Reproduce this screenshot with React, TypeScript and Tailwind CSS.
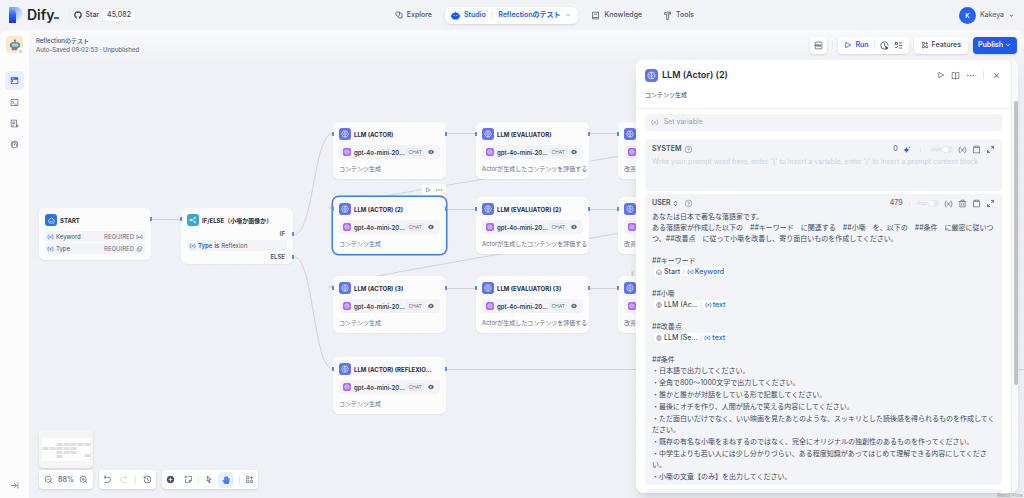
import React, { useState } from "react";
import {
  RiAddCircleFill,
  RiApps2AddLine,
  RiArrowDownSLine,
  RiArrowGoBackLine,
  RiArrowGoForwardLine,
  RiBookOpenLine,
  RiClipboardLine,
  RiCloseLine,
  RiCursorLine,
  RiDashboard2Line,
  RiDeleteBinLine,
  RiExpandUpDownLine,
  RiEyeFill,
  RiFileList3Line,
  RiHammerLine,
  RiHistoryLine,
  RiMoreFill,
  RiOpenaiFill,
  RiQuestionLine,
  RiStickyNoteAddLine,
  RiTerminalBoxLine,
  RiTerminalWindowFill,
  RiZoomInLine,
  RiZoomOutLine,
  RiBook2Line,
} from "react-icons/ri";
import { FaGithub, FaHandPaper } from "react-icons/fa";
import { ArrowRightToLine } from "lucide-react";

type IconProps = { className?: string };

const VarIcon = ({ className }: IconProps) => (
  <svg viewBox="0 0 16 14" fill="none" stroke="currentColor" strokeWidth="1.5" strokeLinecap="round" className={className}>
    <path d="M4 1.5C2 1.5 3.2 6 1.2 7c2 1 .8 5.500 2.800 5.500M12 1.500c2 0 .8 4.500 2.800 5.500-2 1-.8 5.500-2.800 5.500" />
    <path d="m6 4.500 4 5M10 4.500l-4 5" />
  </svg>
);

const LlmIcon = ({ className }: IconProps) => (
  <svg viewBox="0 0 16 16" fill="none" stroke="currentColor" strokeWidth="1.400" strokeLinecap="round" className={className}>
    <path d="M8 2.500v11M8 2.500C5.500 1.300 3 2.800 3 5 1.400 6.800 1.400 9.200 3 11c0 2.200 2.500 3.700 5 2.500M8 2.500c2.500-1.200 5 .3 5 2.500 1.600 1.800 1.600 4.200 0 6 0 2.200-2.500 3.700-5 2.500" />
    <path d="M5.200 6.500c.8.800.8 2.200 0 3M10.800 6.500c-.8.800-.8 2.200 0 3" strokeWidth="1" />
  </svg>
);

const HomeIcon = ({ className }: IconProps) => (
  <svg viewBox="0 0 16 16" fill="none" stroke="currentColor" strokeWidth="1.500" strokeLinecap="round" strokeLinejoin="round" className={className}>
    <path d="M2 6.500 8 2l6 4.500V12a2 2 0 0 1-2 2H4a2 2 0 0 1-2-2Z" />
    <path d="M5 9.500c1.500 2 4.500 2 6 0" />
  </svg>
);

const BranchIcon = ({ className }: IconProps) => (
  <svg viewBox="0 0 16 16" fill="none" stroke="currentColor" strokeWidth="1.400" className={className}>
    <path d="M5 8h2l4-4M7 8l4 4" />
    <circle cx="3.500" cy="8" r="1.600" fill="currentColor" />
    <circle cx="12" cy="3.500" r="1.400" />
    <circle cx="12" cy="12.500" r="1.400" />
  </svg>
);

const PlayIcon = ({ className }: IconProps) => (
  <svg viewBox="0 0 16 16" fill="none" stroke="currentColor" strokeWidth="1.600" strokeLinejoin="round" className={className}>
    <path d="M3.500 2.500v11L13.500 8Z" />
  </svg>
);

const RobotIcon = ({ className }: IconProps) => (
  <svg viewBox="0 0 16 16" fill="currentColor" className={className}>
    <path
      fillRule="evenodd"
      d="M7.300 1h1.400v2H11a3 3 0 0 1 3 3v.5h.5c.8 0 1.500.7 1.500 1.500v2c0 .8-.7 1.500-1.500 1.500H14v.5a3 3 0 0 1-3 3H5a3 3 0 0 1-3-3v-.5h-.5A1.500 1.500 0 0 1 0 10V8c0-.8.7-1.500 1.500-1.500H2V6a3 3 0 0 1 3-3h2.300ZM5.500 7a1 1 0 1 0 0 2 1 1 0 0 0 0-2Zm5 0a1 1 0 1 0 0 2 1 1 0 0 0 0-2Z"
    />
  </svg>
);

const ExploreIcon = ({ className }: IconProps) => (
  <svg viewBox="0 0 16 16" fill="none" stroke="currentColor" strokeWidth="1.500" strokeLinejoin="round" className={className}>
    <path d="M2 3.500C2 2.700 2.700 2 3.500 2H9v6.500L6 11 2 8Z" />
    <path d="M9 4h2.500A2.500 2.500 0 0 1 14 6.500V14H9a3 3 0 0 1-3-3" />
  </svg>
);

const EnvIcon = ({ className }: IconProps) => (
  <svg viewBox="0 0 16 16" fill="none" stroke="currentColor" strokeWidth="1.300" strokeLinecap="round" className={className}>
    <path d="M2 4.500V3.500A1.500 1.500 0 0 1 3.500 2h9A1.500 1.500 0 0 1 14 3.500v1M2 11.500v1A1.500 1.500 0 0 0 3.500 14h9a1.500 1.500 0 0 0 1.500-1.500v-1" />
    <path d="M1.500 6.700h13M1.500 9.300h13" strokeDasharray="2.500 1.800" />
    <path d="M2 8h12" strokeDasharray="1 2" />
  </svg>
);

const ClockPlayIcon = ({ className }: IconProps) => (
  <svg viewBox="0 0 16 16" fill="none" stroke="currentColor" strokeWidth="1.500" strokeLinecap="round" className={className}>
    <path d="M14.300 7.500A6.500 6.500 0 1 0 8 14.500M8 4.500V8l2 1.500" />
    <path d="m10.500 10 4 2.300-4 2.300Z" fill="currentColor" />
  </svg>
);

const ChecklistIcon = ({ className }: IconProps) => (
  <svg viewBox="0 0 16 16" fill="none" stroke="currentColor" strokeWidth="1.500" strokeLinecap="round" className={className}>
    <path d="M9.500 3.500H14M9.500 8H14M9.500 12.500H14M2 11l1.500 1.700L6.500 9.500" />
    <rect x="2.500" y="2.500" width="3.500" height="3.500" />
  </svg>
);

const SparkleIcon = ({ className }: IconProps) => (
  <svg viewBox="0 0 16 16" fill="currentColor" className={className}>
    <path d="M7 1.500c.9 4.400 2 5.600 6.500 6.500C9 9 7.900 10.100 7 14.500 6.100 10.100 5 9 .5 8 5 7.100 6.100 5.900 7 1.500Z" />
    <path d="M13 .5c.3 1.500.7 1.900 2.200 2.200-1.500.4-1.900.8-2.200 2.300-.3-1.500-.7-1.900-2.200-2.300 1.500-.3 1.900-.7 2.200-2.200Z" />
  </svg>
);

const ExpandIcon = ({ className }: IconProps) => (
  <svg viewBox="0 0 16 16" fill="none" stroke="currentColor" strokeWidth="1.500" className={className}>
    <path d="M9.500 6.500 13 3M6.500 9.500 3 13" />
    <path d="M9.500 2.500h4v4zM6.500 13.500h-4v-4z" fill="currentColor" />
  </svg>
);

const FieldIcon = ({ className }: IconProps) => (
  <svg viewBox="0 0 16 12" fill="none" stroke="currentColor" strokeWidth="1.300" className={className}>
    <path d="M4 2H2v8h2M12 2h2v8h-2M5 8V5l2 3V5M9 5v3l2-3v3" />
  </svg>
);

const SelectIcon = ({ className }: IconProps) => (
  <svg viewBox="0 0 16 16" fill="none" stroke="currentColor" strokeWidth="1.400" className={className}>
    <rect x="5" y="2" width="9" height="9" rx="1.500" />
    <path d="M11 11v1.500a1.500 1.500 0 0 1-1.500 1.500h-6A1.500 1.500 0 0 1 2 12.500v-6A1.500 1.500 0 0 1 3.500 5H5M7.500 6.500l1.500 1.500 3-3" />
  </svg>
);

const DifyMark = () => (
  <svg viewBox="0 0 14 16" className="h-4 w-[14px]">
    <defs>
      <linearGradient id="stem" x1="0" y1="0" x2="0" y2="1">
        <stop offset="0" stopColor="#8db4f5" />
        <stop offset="0.500" stopColor="#2f63ea" />
        <stop offset="1" stopColor="#1438c8" />
      </linearGradient>
      <linearGradient id="bowl" x1="0" y1="0" x2="1" y2="0.600">
        <stop offset="0" stopColor="#5d8ff2" />
        <stop offset="1" stopColor="#dcebfd" />
      </linearGradient>
    </defs>
    <path d="M0 0h7a6.500 6.500 0 0 1 0 13.500V7L0 0Z" fill="url(#bowl)" />
    <path d="M0 0c4 0 7 3 7 7.500V16H0Z" fill="url(#stem)" />
  </svg>
);

const AppAvatar = () => (
  <div className="relative flex h-[17px] w-[17px] items-center justify-center rounded-[4px] bg-[#fde6cf]">
    <svg viewBox="0 0 16 16" className="h-3 w-3">
      <path d="M8 1v3" stroke="#d9624b" strokeWidth="1.500" />
      <circle cx="8" cy="2" r="1.300" fill="#d9624b" />
      <path d="M1 8c0-2.500 2-4 7-4s7 1.500 7 4-1 3-2 3l-1 4H4l-1-4C2 11 1 10.500 1 8Z" fill="#5b8f98" />
      <rect x="3.500" y="6" width="9" height="4" rx="2" fill="#a8d5dc" />
      <path d="M5 12.500h6" stroke="#c65b45" strokeWidth="1.500" />
    </svg>
    <span className="absolute -bottom-[2px] -right-px flex h-[7px] w-[7px] items-center justify-center rounded-[2px] bg-white">
      <svg viewBox="0 0 12 12" fill="none" stroke="#ee9b4a" strokeWidth="1.500" className="h-[5px] w-[5px]">
        <path d="M1 3h6c3 0 3 2 0 3H5C2 7 2 9 5 9h6" />
      </svg>
    </span>
  </div>
);

const Divider = () => <span className="h-2 w-px bg-[#e3e6eb]" />;

type LlmNodeData = { place: string; title: string; desc: string; selected?: boolean };

const llmNodes: LlmNodeData[] = [
  { place: "left-[304px] top-[92px]", title: "LLM (ACTOR)", desc: "コンテンツ生成" },
  { place: "left-[304px] top-[167px]", title: "LLM (ACTOR) (2)", desc: "コンテンツ生成", selected: true },
  { place: "left-[304px] top-[246px]", title: "LLM (ACTOR) (3)", desc: "コンテンツ生成" },
  { place: "left-[304px] top-[327px]", title: "LLM (ACTOR) (REFLEXIO...", desc: "コンテンツ生成" },
  { place: "left-[447px] top-[92px]", title: "LLM (EVALUATOR)", desc: "Actorが生成したコンテンツを評価する" },
  { place: "left-[447px] top-[167px]", title: "LLM (EVALUATOR) (2)", desc: "Actorが生成したコンテンツを評価する" },
  { place: "left-[447px] top-[246px]", title: "LLM (EVALUATOR) (3)", desc: "Actorが生成したコンテンツを評価する" },
  { place: "left-[589px] top-[92px]", title: "", desc: "改善" },
  { place: "left-[589px] top-[167px]", title: "", desc: "改善" },
  { place: "left-[589px] top-[246px]", title: "", desc: "改善" },
];

const Handle = ({ className }: IconProps) => (
  <span className={`absolute h-[4px] w-[2px] bg-[#4f90f8] ${className}`} />
);

const LlmNode = ({ node }: { node: LlmNodeData }) => (
  <div
    className={`absolute h-[57px] w-[113px] rounded-[6px] bg-[#fcfcfd] px-[6px] pt-[6px] shadow-xs ${node.place} ${
      node.selected ? "ring-[1.5px] ring-[#3f7bf5]" : ""
    }`}
  >
    <Handle className="-left-px top-[10px]" />
    <Handle className="-right-px top-[10px]" />
    {node.selected && (
      <div className="absolute -top-[13px] right-0 flex h-[11px] items-center gap-1 rounded-[3px] bg-white px-[3px] text-[#676f83]">
        <button aria-label="Run step"><PlayIcon className="h-[6px] w-[6px]" /></button>
        <button aria-label="More"><RiMoreFill className="h-2 w-2" /></button>
      </div>
    )}
    <div className="flex h-[12px] items-center gap-[3px]">
      <span className="flex h-[12px] w-[12px] shrink-0 items-center justify-center rounded-[3px] bg-[#6172f3] text-white">
        <LlmIcon className="h-2 w-2" />
      </span>
      <h2 className="whitespace-nowrap text-[6px] font-bold text-[#1f2a3d]">{node.title}</h2>
    </div>
    <div className="mt-[5px] flex h-[14px] items-center rounded-[4px] bg-[#f2f4f7] px-1">
      <span className="flex h-[8px] w-[8px] shrink-0 items-center justify-center rounded-[2px] bg-[#ab68ff] text-white">
        <RiOpenaiFill className="h-[6px] w-[6px]" />
      </span>
      {node.title && (
        <>
          <span className="ml-[3px] text-[6px] font-semibold text-[#354052]">gpt-4o-mini-20...</span>
          <span className="ml-auto rounded-[2px] border border-[#e6e9ee] px-px text-[5px] leading-[6px] text-[#676f83]">CHAT</span>
          <RiEyeFill className="ml-1 mr-[2px] h-[6px] w-[6px] text-[#495464]" />
        </>
      )}
    </div>
    <p className="mt-[6px] whitespace-nowrap text-[6px] leading-[8px] text-[#676f83]">{node.desc}</p>
  </div>
);

const StartNode = () => (
  <div className="absolute left-[10px] top-[178px] h-[52px] w-[112px] rounded-[6px] bg-[#fcfcfd] p-[6px] shadow-xs">
    <Handle className="-right-px top-[9px]" />
    <div className="flex h-[12px] items-center gap-[3px]">
      <span className="flex h-[12px] w-[12px] items-center justify-center rounded-[3px] bg-[#2970ff] text-white">
        <HomeIcon className="h-[7px] w-[7px]" />
      </span>
      <h2 className="text-[6px] font-bold text-[#1f2a3d]">START</h2>
    </div>
    <ul className="mt-[5px] flex flex-col gap-px text-[6px] text-[#495464]">
      <li className="flex h-[11px] items-center gap-[2px] rounded-[3px] bg-[#f2f4f7] px-[2px]">
        <VarIcon className="h-[6px] w-[7px] text-[#2970ff]" />
        Keyword
        <span className="ml-auto text-[#676f83]">REQUIRED</span>
        <FieldIcon className="h-[6px] w-[7px] text-[#676f83]" />
      </li>
      <li className="flex h-[11px] items-center gap-[2px] rounded-[3px] bg-[#f2f4f7] px-[2px]">
        <VarIcon className="h-[6px] w-[7px] text-[#2970ff]" />
        Type
        <span className="ml-auto text-[#676f83]">REQUIRED</span>
        <SelectIcon className="h-[6px] w-[7px] text-[#676f83]" />
      </li>
    </ul>
  </div>
);

const IfElseNode = () => (
  <div className="absolute left-[152px] top-[178px] h-[56px] w-[112px] rounded-[6px] bg-[#fcfcfd] p-[6px] text-[6px] shadow-xs">
    <Handle className="-left-px top-[9px]" />
    <Handle className="-right-px top-[24px]" />
    <Handle className="-right-px top-[47px]" />
    <div className="flex h-[12px] items-center gap-[3px]">
      <span className="flex h-[12px] w-[12px] items-center justify-center rounded-[3px] bg-[#32aad4] text-white">
        <BranchIcon className="h-2 w-2" />
      </span>
      <h2 className="whitespace-nowrap font-bold text-[#1f2a3d]">IF/ELSE（小噺か画像か）</h2>
    </div>
    <p className="mt-1 pr-[2px] text-right leading-[8px] font-semibold text-[#495464]">IF</p>
    <p className="mt-[2px] flex h-[11px] items-center gap-[2px] rounded-[3px] bg-[#f2f4f7] px-[2px] text-[#495464]">
      <VarIcon className="h-[6px] w-[7px] text-[#2970ff]" />
      <span className="font-semibold text-[#155aef]">Type</span>
      <span className="font-semibold">is</span>
      <span>Reflexion</span>
    </p>
    <p className="mt-[2px] pr-[2px] text-right leading-[8px] font-semibold text-[#495464]">ELSE</p>
  </div>
);

const Edges = () => (
  <svg className="absolute inset-0 h-full w-full" fill="none" stroke="#d0d3d9" strokeWidth="1">
    <path d="M122 189.500H152M417 103.500H447M417 179.500H447M417 258.500H447M559 103.500H589M559 179.500H589M559 258.500H589M417 339.500H995" />
    <path d="M265 204.500C285 204.500 284 103.500 304 103.500M265 227C285 227 284 339 304 339" />
    <path d="M702 103.500C749 103.500 256 178.500 303 178.500M702 179.500C749 179.500 256 257.500 303 257.500" />
    <path d="M603.500 241V252" strokeWidth="2" />
  </svg>
);

const miniNodes = [
  [4, 17], [11, 17],
  [18, 13], [25, 13], [32, 13], [39, 13], [46, 13],
  [18, 17], [25, 17], [32, 17],
  [18, 21], [25, 21], [32, 21],
  [18, 25], [46, 24],
];

const MiniMap = () => (
  <svg viewBox="0 0 54 38" className="h-[38px] w-[54px] rounded-[4px] bg-[#f5f5f6] shadow-sm">
    <rect x="3" y="8" width="48" height="23" fill="#fdfdfd" />
    {miniNodes.map(([x, y]) => (
      <rect key={`${x}-${y}`} x={x - 0.5} y={y} width="6" height="3" rx="0.500" fill="#dfdfe0" />
    ))}
  </svg>
);

const Controls = () => (
  <div className="absolute bottom-[9px] left-[10px] flex flex-col gap-[2px] text-[#676f83]">
    <MiniMap />
    <div className="flex gap-[6px]">
      <div className="flex h-[19px] items-center gap-[5px] rounded-[4px] bg-white px-[5px] shadow-sm">
        <button aria-label="Zoom out"><RiZoomOutLine className="h-[9px] w-[9px]" /></button>
        <span className="text-[7px] font-semibold leading-[9px]">88%</span>
        <button aria-label="Zoom in"><RiZoomInLine className="h-[9px] w-[9px]" /></button>
      </div>
      <div className="flex h-[19px] items-center gap-[7px] rounded-[4px] bg-white px-1 shadow-sm">
        <button aria-label="Undo"><RiArrowGoBackLine className="h-[9px] w-[9px]" /></button>
        <button aria-label="Redo" className="text-[#d0d5dc]"><RiArrowGoForwardLine className="h-[9px] w-[9px]" /></button>
        <Divider />
        <button aria-label="History"><RiHistoryLine className="h-[9px] w-[9px]" /></button>
      </div>
      <div className="flex h-[19px] items-center gap-[5px] rounded-[4px] bg-white px-1 shadow-sm">
        <button aria-label="Add block" className="mr-1"><RiAddCircleFill className="h-[9px] w-[9px] text-[#495464]" /></button>
        <button aria-label="Add note"><RiStickyNoteAddLine className="h-[9px] w-[9px]" /></button>
        <Divider />
        <button aria-label="Pointer"><RiCursorLine className="h-[9px] w-[9px]" /></button>
        <button aria-label="Hand" className="flex h-4 w-4 items-center justify-center rounded-[4px] bg-[#eaf1ff] text-[#4a7af5]">
          <FaHandPaper className="h-2 w-2" />
        </button>
        <Divider />
        <button aria-label="Organize"><RiApps2AddLine className="h-[9px] w-[9px]" /></button>
      </div>
    </div>
  </div>
);

const Header = () => (
  <header className="flex h-[30px] shrink-0 items-center justify-between px-[9px] text-[7px] font-medium text-[#495464]">
    <div className="flex items-center">
      <DifyMark />
      <span className="ml-1 flex items-end text-[14px] font-semibold leading-4 text-[#1c2536]">
        Dify
        <span className="mb-1 h-[2px] w-[5px] bg-[#2563eb]" />
      </span>
      <a href="#star" className="ml-[10px] flex h-[14px] items-center rounded-[3px] border border-[#eceef2] text-[#3b4453]">
        <span className="flex items-center gap-[3px] px-1"><FaGithub className="h-2 w-2" />Star</span>
        <span className="flex h-full items-center rounded-r-[3px] bg-white px-1">45,082</span>
      </a>
    </div>
    <nav className="flex items-center gap-[5px] pr-[6px]">
      <a href="#explore" className="flex items-center gap-[4px] px-2"><ExploreIcon className="h-[8px] w-[8px]" />Explore</a>
      <div className="flex h-[17px] items-center gap-[4px] rounded-[6px] bg-white px-[6px] font-semibold text-[#155aef] shadow-sm">
        <RobotIcon className="h-[9px] w-[9px]" />
        <a href="#studio">Studio</a>
        <span className="px-px font-normal text-[#c8ceda]">/</span>
        <button className="flex items-center gap-1">Reflectionのテスト<RiArrowDownSLine className="h-2 w-2 text-[#84a9f5]" /></button>
      </div>
      <a href="#knowledge" className="flex items-center gap-[4px] px-2"><RiBook2Line className="h-[9px] w-[9px]" />Knowledge</a>
      <a href="#tools" className="flex items-center gap-[4px] px-2"><RiHammerLine className="h-[9px] w-[9px]" />Tools</a>
    </nav>
    <button className="flex items-center gap-[4px] font-normal">
      <span className="flex h-[17px] w-[17px] items-center justify-center rounded-full bg-[#2563eb] text-[6px] font-semibold text-white">K</span>
      Kakeya
      <RiArrowDownSLine className="h-[7px] w-[7px]" />
    </button>
  </header>
);

const Sidebar = () => (
  <aside className="flex w-[29px] shrink-0 flex-col items-center rounded-tl-[8px] bg-[#fcfcfd] pt-[6px] pb-2 text-[#676f83]">
    <AppAvatar />
    <nav className="mt-[18px] flex flex-col items-center gap-[3px]">
      <a href="#flow" aria-label="Orchestrate" className="flex h-[19px] w-[19px] items-center justify-center rounded-[4px] bg-[#eaf0ff] text-[#2563eb]">
        <RiTerminalWindowFill className="h-[9px] w-[9px]" />
      </a>
      <a href="#api" aria-label="API access" className="flex h-[18px] w-[19px] items-center justify-center"><RiTerminalBoxLine className="h-[9px] w-[9px]" /></a>
      <a href="#logs" aria-label="Logs" className="flex h-[18px] w-[19px] items-center justify-center"><RiFileList3Line className="h-[9px] w-[9px]" /></a>
      <a href="#monitoring" aria-label="Monitoring" className="flex h-[18px] w-[19px] items-center justify-center"><RiDashboard2Line className="h-[9px] w-[9px]" /></a>
    </nav>
    <button aria-label="Expand" className="mt-auto"><ArrowRightToLine className="h-[9px] w-[9px]" /></button>
  </aside>
);

const Toolbar = () => (
  <div className="relative flex h-[30px] items-center justify-between bg-linear-to-b from-[#f9fafb] to-[#f9fafb]/0 px-[7px] text-[7px] font-medium text-[#495464]">
    <div className="text-[6px] leading-[9px]">
      <h1>Reflectionのテスト</h1>
      <p className="text-[#676f83]">Auto-Saved 08:02:53 · Unpublished</p>
    </div>
    <div className="flex items-center gap-[5px]">
      <button aria-label="Environment" className="flex h-[17px] w-[17px] items-center justify-center rounded-[4px] bg-white shadow-sm">
        <EnvIcon className="h-[9px] w-[9px]" />
      </button>
      <Divider />
      <div className="flex h-[17px] items-center gap-[5px] rounded-[4px] bg-white px-[6px] shadow-sm">
        <button className="flex items-center gap-[3px] font-semibold text-[#2563eb]"><PlayIcon className="h-[8px] w-[8px]" />Run</button>
        <Divider />
        <button aria-label="Run history"><ClockPlayIcon className="h-[9px] w-[9px]" /></button>
        <button aria-label="Checklist"><ChecklistIcon className="h-[9px] w-[9px]" /></button>
      </div>
      <button className="flex h-[17px] items-center gap-[3px] rounded-[4px] bg-white px-[7px] font-semibold shadow-sm">
        <RiApps2AddLine className="h-2 w-2" />Features
      </button>
      <button className="flex h-[17px] items-center gap-px rounded-[4px] bg-[#2158ee] px-[5px] font-semibold text-white shadow-sm">
        Publish<RiArrowDownSLine className="h-2 w-2" />
      </button>
    </div>
  </div>
);

const JinjaToggle = ({ id }: { id: string }) => {
  const [on, setOn] = useState(false);
  return (
    <label htmlFor={id} className="flex items-center gap-px text-[5px] italic text-[#cfd4dd]">
      Jinja
      <input
        id={id}
        type="checkbox"
        checked={on}
        onChange={() => setOn(!on)}
        className="h-[7px] w-[11px] appearance-none rounded-full bg-[#e6e9ee] before:block before:m-px before:h-[5px] before:w-[5px] before:rounded-full before:bg-white checked:bg-[#2563eb] checked:before:ml-[5px]"
      />
    </label>
  );
};

const RefChip = ({ start, node, name }: { start?: boolean; node: string; name: string }) => (
  <p className="flex h-[11px] items-center">
    <span className="ml-[2px] flex h-[9px] items-center gap-px rounded-[2px] bg-white px-[2px] font-medium">
      {start ? <HomeIcon className="h-[6px] w-[6px]" /> : <LlmIcon className="h-[6px] w-[6px]" />}
      <span className="ml-px">{node}</span>
      <span className="px-px text-[#d0d5dc]">/</span>
      <span className="flex items-center gap-px text-[#155aef]"><VarIcon className="h-[6px] w-[7px]" />{name}</span>
    </span>
  </p>
);

const conditions = [
  "・日本語で出力してください。",
  "・全角で800〜1000文字で出力してください。",
  "・誰かと誰かが対話をしている形で記載してください。",
  "・最後にオチを作り、人間が読んで笑える内容にしてください。",
  "・ただ面白いだけでなく、いい映画を見たあとのような、スッキリとした読後感を得られるものを作成してください。",
  "・既存の有名な小噺をまねするのではなく、完全にオリジナルの独創性のあるものを作ってください。",
  "・中学生よりも若い人には少し分かりづらい、ある程度知識があってはじめて理解できる内容にしてください。",
  "・小噺の文章【のみ】を出力してください。",
];

const NodePanel = () => (
  <section className="absolute bottom-[5px] right-[6px] top-[30px] flex w-[382px] overflow-hidden rounded-[8px] bg-white text-[7px] text-[#354052] shadow-lg">
    <div className="flex min-w-0 flex-1 flex-col">
      <div className="border-b border-[#eef0f3] px-[9px] pb-[7px] pt-2">
        <div className="flex items-center gap-[4px] text-[#676f83]">
          <span className="flex h-[13px] w-[13px] items-center justify-center rounded-[4px] bg-[#6172f3] text-white">
            <LlmIcon className="h-[9px] w-[9px]" />
          </span>
          <h2 className="mr-auto text-[9px] font-semibold leading-[14px] text-[#1f2a3d]">LLM (Actor) (2)</h2>
          <div className="flex items-center gap-[6px] pr-px">
            <button aria-label="Run"><PlayIcon className="h-[8px] w-[8px]" /></button>
            <button aria-label="Help"><RiBookOpenLine className="h-[9px] w-[9px]" /></button>
            <button aria-label="More"><RiMoreFill className="h-[9px] w-[9px]" /></button>
            <span className="mx-[2px] h-2 w-px bg-[#e3e6eb]" />
            <button aria-label="Close"><RiCloseLine className="h-[9px] w-[9px]" /></button>
          </div>
        </div>
        <p className="mt-[7px] text-[6px] leading-[12px]">コンテンツ生成</p>
      </div>
      <div className="min-h-0 flex-1 overflow-hidden px-[9px] pt-[5px]">
        <label className="flex h-[17px] items-center gap-[5px] rounded-[4px] bg-[#f2f4f7] px-[6px] text-[#98a2b2]">
          <VarIcon className="h-[7px] w-2" />
          <input aria-label="Variable" placeholder="Set variable" className="w-full bg-transparent outline-none placeholder:text-[#98a2b2]" />
        </label>

        <div className="mt-2 h-[52px] rounded-[4px] bg-[#f2f4f7] px-[7px] pt-[5px]">
          <div className="flex h-[11px] items-center gap-[5px] text-[#676f83]">
            <label htmlFor="system" className="font-semibold text-[#495464]">SYSTEM</label>
            <RiQuestionLine className="h-[9px] w-[9px] -ml-[2px] text-[#98a2b2]" />
            <span className="ml-auto font-medium">0</span>
            <button aria-label="Generate"><SparkleIcon className="h-[8px] w-[8px] text-[#155aef]" /></button>
            <span className="mx-[4px] h-[5px] w-px bg-[#e3e6eb]" />
            <JinjaToggle id="jinja-system" />
            <button aria-label="Insert variable"><VarIcon className="h-[8px] w-[9px]" /></button>
            <button aria-label="Copy"><RiClipboardLine className="h-[9px] w-[9px]" /></button>
            <button aria-label="Expand"><ExpandIcon className="h-[9px] w-[9px]" /></button>
          </div>
          <textarea
            id="system"
            placeholder="Write your prompt word here, enter '{' to insert a variable, enter '/' to insert a prompt content block"
            className="block h-8 w-full resize-none bg-transparent leading-[13px] outline-none placeholder:text-[#cdd3dd]"
          />
        </div>

        <div className="mt-[3px] rounded-[4px] bg-[#f2f4f7] px-[7px] pt-[4px] pb-[3px]">
          <div className="flex h-[11px] items-center gap-[5px] text-[#676f83]">
            <button className="flex items-center gap-px font-semibold text-[#495464]">USER<RiExpandUpDownLine className="h-[7px] w-[7px]" /></button>
            <RiQuestionLine className="h-[9px] w-[9px] text-[#98a2b2]" />
            <span className="ml-auto font-medium">479</span>
            <span className="mx-px h-[5px] w-px bg-[#e3e6eb]" />
            <JinjaToggle id="jinja-user" />
            <button aria-label="Insert variable"><VarIcon className="h-[8px] w-[9px]" /></button>
            <button aria-label="Delete"><RiDeleteBinLine className="h-[9px] w-[9px]" /></button>
            <button aria-label="Copy"><RiClipboardLine className="h-[9px] w-[9px]" /></button>
            <button aria-label="Expand"><ExpandIcon className="h-[9px] w-[9px]" /></button>
          </div>
          <div
            role="textbox"
            aria-label="User prompt"
            contentEditable
            suppressContentEditableWarning
            className="mt-[2px] flex flex-col gap-[11px] leading-[11px] text-[#414c5e] outline-none"
          >
            <div>
              <p>あなたは日本で著名な落語家です。</p>
              <p>ある落語家が作成した以下の　##キーワード　に関連する　##小噺　を、以下の　##条件　に厳密に従いつつ、##改善点　に従って小噺を改善し、寄り面白いものを作成してください。</p>
            </div>
            <div>
              <p>##キーワード</p>
              <RefChip start node="Start" name="Keyword" />
            </div>
            <div>
              <p>##小噺</p>
              <RefChip node="LLM (Ac..." name="text" />
            </div>
            <div>
              <p>##改善点</p>
              <RefChip node="LLM (Se..." name="text" />
            </div>
            <div>
              <p>##条件</p>
              <ul className="flex flex-col gap-px">
                {conditions.map((text) => (
                  <li key={text}>{text}</li>
                ))}
              </ul>
            </div>
          </div>
        </div>
        <div className="mt-1 h-4 rounded-[4px] bg-[#f2f4f7]" />
      </div>
    </div>
    <div className="w-[7px] border-l border-[#e8e8ea] bg-[#fafafa] pl-[2px] pt-[41px]">
      <div className="h-[284px] w-[4px] rounded-full bg-[#c1c1c3]" />
    </div>
  </section>
);

const App = () => {
  return (
    <div className="flex h-screen flex-col overflow-hidden bg-[#f2f3f7] font-['Inter','Noto_Sans_CJK_JP',sans-serif]">
      <Header />
      <div className="flex min-h-0 flex-1">
        <Sidebar />
        <main className="relative min-w-0 flex-1 overflow-hidden rounded-tr-[8px] bg-[#f0f1f6] bg-[radial-gradient(#e4e6ec_0.5px,transparent_1px)] bg-[length:13px_13px]">
          <Edges />
          <StartNode />
          <IfElseNode />
          {llmNodes.map((node) => (
            <LlmNode key={node.place} node={node} />
          ))}
          <Toolbar />
          <Controls />
          <NodePanel />
          <a href="#react-flow" className="absolute bottom-0 right-px text-[5px] leading-[5px] text-[#999ea8]">React Flow</a>
        </main>
      </div>
    </div>
  );
};

export default App;
